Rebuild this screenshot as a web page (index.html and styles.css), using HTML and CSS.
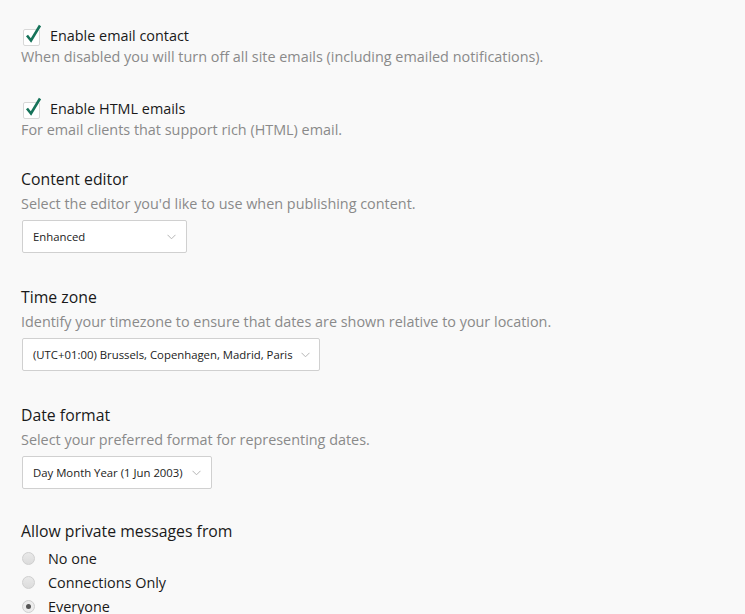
FILE: index.html
```html
<!DOCTYPE html>
<html lang="en">
<head>
<meta charset="utf-8">
<title>Preferences</title>
<link rel="stylesheet" href="styles.css">
</head>
<body>
<div class="page">
  <div class="field check-field">
    <label class="check-row">
      <span class="checkbox">
        <svg width="20" height="22" viewBox="0 0 20 22"><path d="M3 12.5 L7 17.5 L16 2.5" fill="none" stroke="#16735a" stroke-width="2.6" stroke-linecap="butt" stroke-linejoin="miter"/></svg>
      </span>
      <span class="check-label">Enable email contact</span>
    </label>
    <p class="desc">When disabled you will turn off all site emails (including emailed notifications).</p>
  </div>

  <div class="field check-field second">
    <label class="check-row">
      <span class="checkbox">
        <svg width="20" height="22" viewBox="0 0 20 22"><path d="M3 12.5 L7 17.5 L16 2.5" fill="none" stroke="#16735a" stroke-width="2.6" stroke-linecap="butt" stroke-linejoin="miter"/></svg>
      </span>
      <span class="check-label">Enable HTML emails</span>
    </label>
    <p class="desc">For email clients that support rich (HTML) email.</p>
  </div>

  <div class="field select-field">
    <h3 class="heading">Content editor</h3>
    <p class="desc">Select the editor you'd like to use when publishing content.</p>
    <div class="select sel-editor">
      <span class="sel-text">Enhanced</span>
      <svg class="chev" width="9" height="6" viewBox="0 0 9 6"><path d="M0.5 0.8 L4.5 4.8 L8.5 0.8" fill="none" stroke="#b5b5b5" stroke-width="1"/></svg>
    </div>
  </div>

  <div class="field select-field">
    <h3 class="heading">Time zone</h3>
    <p class="desc">Identify your timezone to ensure that dates are shown relative to your location.</p>
    <div class="select sel-tz">
      <span class="sel-text">(UTC+01:00) Brussels, Copenhagen, Madrid, Paris</span>
      <svg class="chev" width="9" height="6" viewBox="0 0 9 6"><path d="M0.5 0.8 L4.5 4.8 L8.5 0.8" fill="none" stroke="#b5b5b5" stroke-width="1"/></svg>
    </div>
  </div>

  <div class="field select-field">
    <h3 class="heading">Date format</h3>
    <p class="desc">Select your preferred format for representing dates.</p>
    <div class="select sel-date">
      <span class="sel-text">Day Month Year (1 Jun 2003)</span>
      <svg class="chev" width="9" height="6" viewBox="0 0 9 6"><path d="M0.5 0.8 L4.5 4.8 L8.5 0.8" fill="none" stroke="#b5b5b5" stroke-width="1"/></svg>
    </div>
  </div>

  <div class="field radio-field">
    <h3 class="heading">Allow private messages from</h3>
    <ul class="radios">
      <li class="radio-row"><span class="radio"></span><span class="radio-label">No one</span></li>
      <li class="radio-row"><span class="radio"></span><span class="radio-label">Connections Only</span></li>
      <li class="radio-row"><span class="radio checked"></span><span class="radio-label">Everyone</span></li>
    </ul>
  </div>
</div>
</body>
</html>
```
FILE: styles.css
```css
html, body {
  margin: 0;
  padding: 0;
  background: #f9f9f9;
}
body {
  font-family: "Open Sans", "Liberation Sans", sans-serif;
  color: #222;
  overflow: hidden;
}
.page {
  padding: 25px 0 0 21px;
}
.field {
  display: flex;
  flex-direction: column;
  align-items: flex-start;
}
.check-field.second {
  margin-top: 31px;
}
.check-row {
  display: flex;
  align-items: center;
  height: 22px;
}
.checkbox {
  position: relative;
  width: 15px;
  height: 15px;
  margin-left: 2px;
  margin-top: 3px;
  border: 1px solid #d8d8d8;
  border-radius: 2px;
  background: #fff;
}
.checkbox svg {
  position: absolute;
  left: 0;
  top: -7px;
}
.check-label {
  margin-left: 10px;
  font-size: 14.4px;
  line-height: 22px;
  color: #1a1a1a;
}
.desc {
  margin: 0;
  font-size: 14.4px;
  line-height: 20px;
  color: #8a8a8a;
}
.select-field {
  margin-top: 27px;
}
.select-field + .select-field {
  margin-top: 32px;
}
.heading {
  margin: 0 0 3px 0;
  font-size: 15.8px;
  font-weight: normal;
  line-height: 24px;
  color: #1a1a1a;
}
.select {
  display: flex;
  align-items: center;
  justify-content: space-between;
  box-sizing: border-box;
  height: 33px;
  margin: 6px 0 0 1px;
  padding: 0 10px 0 10px;
  border: 1px solid #d0d0d0;
  border-radius: 2px;
  background: #fff;
}
.sel-editor { width: 165px; }
.sel-tz { width: 298px; }
.sel-date { width: 190px; }
.sel-text {
  font-size: 11.35px;
  color: #222;
  white-space: nowrap;
}
.chev {
  flex: none;
  margin-left: 8px;
}
.radio-field {
  margin-top: 30px;
}
.radios {
  list-style: none;
  margin: 0;
  padding: 0;
}
.radio-row {
  display: flex;
  align-items: center;
  height: 24px;
}
.radio {
  box-sizing: border-box;
  width: 13px;
  height: 13px;
  margin-left: 1px;
  border: 1px solid #cfcfcf;
  border-radius: 50%;
  background: linear-gradient(#e9e9e9, #dcdcdc);
  position: relative;
}
.radio.checked {
  background: #ececec;
}
.radio.checked::after {
  content: "";
  position: absolute;
  left: 3px;
  top: 3px;
  width: 5px;
  height: 5px;
  border-radius: 50%;
  background: #555;
}
.radio-label {
  margin-left: 13px;
  font-size: 14.4px;
  color: #1a1a1a;
}
```
